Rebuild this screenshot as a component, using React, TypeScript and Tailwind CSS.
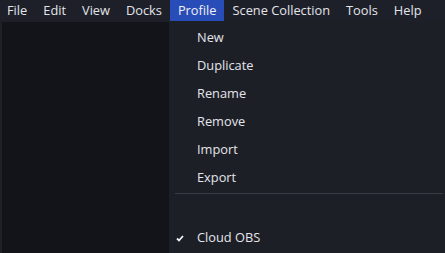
import React from 'react';

const menus = ['File', 'Edit', 'View', 'Docks', 'Profile', 'Scene Collection', 'Tools', 'Help'];
const items = ['New', 'Duplicate', 'Rename', 'Remove', 'Import', 'Export'];

export default function App() {
  return (
    <div
      className="relative w-[445px] h-[253px] overflow-hidden bg-[#1e2029] text-[12.8px] text-[#e4e5ea] flex flex-col"
      style={{ fontFamily: '"Open Sans", "Noto Sans", sans-serif' }}
    >
      <div className="flex h-[22px] shrink-0 -ml-px">
        {menus.map(m => (
          <div
            key={m}
            className={
              'h-[21px] px-2 flex items-center leading-none ' +
              (m === 'Profile' ? 'bg-[#284cb8] text-[#f0f1f5]' : '')
            }
          >
            {m}
          </div>
        ))}
      </div>

      <div className="flex flex-1">
        <div className="ml-[2px] w-[167px] bg-[#131419]" />
      </div>

      <div className="absolute left-[169px] top-[21px] right-0 bottom-0 bg-[#1d1f27] pt-[3px]">
        {items.map(it => (
          <div key={it} className="h-[28px] flex items-center pl-[28px]">
            {it}
          </div>
        ))}
        <div className="h-px bg-[#3a3c45] ml-[6px] mr-[2px] mt-px mb-[2px]" />
        <div className="h-[28px]" />
        <div className="h-[28px] flex items-center pl-[28px] relative">
          <svg
            className="absolute left-[7px] top-[11px]"
            width="8"
            height="7"
            viewBox="0 0 8 7"
            fill="none"
          >
            <path d="M1 3.5 L3 5.5 L7 1" stroke="#f2f3f6" strokeWidth="1.8" />
          </svg>
          Cloud OBS
        </div>
      </div>
    </div>
  );
}
